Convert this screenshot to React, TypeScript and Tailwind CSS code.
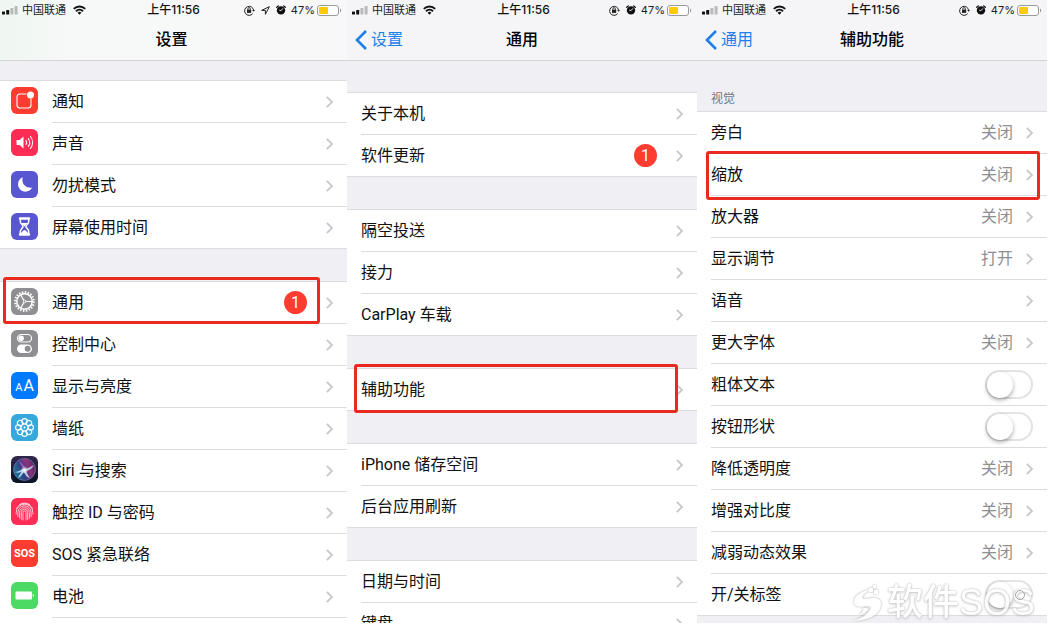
import type { ReactNode } from "react";

type RowProps = {
  label: string;
  icon?: ReactNode;
  iconBg?: string;
  value?: string;
  badge?: number;
  toggle?: boolean;
  last?: boolean;
  mark?: string;
};

function Chevron() {
  return (
    <svg width="7" height="12" viewBox="0 0 7 12" fill="none" stroke="#c7c7cc" strokeWidth="1.8" className="shrink-0">
      <path d="M.8.8 6 6 .8 11.2" />
    </svg>
  );
}

function Row({ label, icon, iconBg, value, badge, toggle, last, mark }: RowProps) {
  const body = (
    <>
      {icon && (
        <span className={`mr-3.5 mb-[3px] ml-[11px] flex size-[27px] shrink-0 items-center justify-center overflow-hidden rounded-md ${iconBg ?? ""}`}>
          {icon}
        </span>
      )}
      <span
        className={`flex h-full min-w-0 flex-1 items-center border-[#dcdce0] pr-3.5 ${
          !icon && last ? "pl-3.5" : ""
        } ${last && icon ? "" : "border-b"}`}
      >
        <span className="flex-1 truncate">{label}</span>
        {value && <span className="mr-[13px] text-[#8e8e93]">{value}</span>}
        {badge && (
          <span className="mr-[19px] flex size-[23px] items-center justify-center rounded-full bg-[#fe3c30] text-white">
            {badge}
          </span>
        )}
        {toggle ? (
          <input
            type="checkbox"
            role="switch"
            className="h-[29px] w-12 appearance-none rounded-full border-2 border-[#e3e3e3] bg-white before:block before:size-[26px] before:rounded-full before:bg-white before:shadow-[0_2px_4px_rgba(0,0,0,0.35)] checked:bg-[#4cd964] checked:before:translate-x-[18px]"
          />
        ) : (
          <Chevron />
        )}
      </span>
      {mark && <span className={`pointer-events-none absolute z-10 rounded-[3px] border-3 border-[#ea291f] ${mark}`} />}
    </>
  );

  const cls = `relative flex h-[42px] items-center bg-white text-base text-[#111] ${
    !icon && !last ? "pl-3.5" : ""
  } ${icon && last ? "border-b border-[#dcdce0]" : ""}`;

  return toggle ? <label className={cls}>{body}</label> : <a href="#" className={cls}>{body}</a>;
}

function Group({ children }: { children: ReactNode }) {
  return <div className="border-t border-[#dcdce0] bg-white">{children}</div>;
}

function StatusBar({ location }: { location?: boolean }) {
  return (
    <div className="grid h-5 grid-cols-[1fr_auto_1fr] items-center font-['Inter','Noto_Sans_CJK_SC',sans-serif] text-[11px] leading-4 text-[#222]">
      <div className={`flex items-center ${location ? "pl-0.5" : "pl-[5px]"}`}>
        <svg width="16" height="9" viewBox="0 0 16 9" fill="#111">
          <rect x="0" y="5.5" width="3" height="3" rx=".6" />
          <rect x="4.2" y="4" width="3" height="4.5" rx=".6" />
          <rect x="8.4" y="2" width="3" height="6.5" rx=".6" fill="#b9babd" />
          <rect x="12.6" y="0" width="3" height="8.5" rx=".6" fill="#b9babd" />
        </svg>
        <span className="ml-1">中国联通</span>
        <svg width="13" height="10" viewBox="0 0 13 10" fill="none" stroke="#111" strokeWidth="1.9" className="ml-[7px]">
          <path d="M.8 3.8a8.1 8.1 0 0 1 11.4 0" />
          <path d="M3 6.2a5 5 0 0 1 7 0" />
          <path d="m4.6 7.8 1.9 2 1.9-2a2.7 2.7 0 0 0-3.8 0Z" fill="#111" stroke="none" />
        </svg>
      </div>
      <span className={`text-xs font-medium text-[#111] ${location ? "" : "pl-[3px]"}`}>上午11:56</span>
      <div className="flex items-center justify-end pr-[5px]">
        <svg width="11" height="11" viewBox="0 0 11 11" fill="none" stroke="#222">
          <path d="M8.7 8.6A4.5 4.5 0 1 1 9.6 5.3" />
          <path d="m8.2 5 1.5 1.8L11 5Z" fill="#222" stroke="none" />
          <rect x="3" y="4.7" width="4.200" height="3.200" fill="#222" stroke="none" />
          <path d="M3.900 5V3.800a1.200 1.200 0 0 1 2.400 0V5" strokeWidth=".9" />
        </svg>
        {location && (
          <svg width="9" height="9" viewBox="0 0 9 9" fill="none" stroke="#222" strokeLinejoin="round" className="ml-1.5">
            <path d="M8.4.6.7 4.4h3.7v3.9Z" />
          </svg>
        )}
        <svg width="10" height="10" viewBox="0 0 10 10" className="ml-1.5">
          <circle cx="5" cy="5.4" r="4.2" fill="#111" />
          <path d="M.7 2.3 2.3.9M9.3 2.3 7.7.9" stroke="#111" strokeWidth="1.3" strokeLinecap="round" />
          <path d="M6.9 3.4 4.9 5.7l-1.6-.6" stroke="#fff" strokeWidth=".9" fill="none" />
        </svg>
        <span className="ml-[5px]">47%</span>
        <svg width="25" height="11" viewBox="0 0 25 11" className="ml-0.5">
          <rect x=".5" y=".5" width="21" height="10" rx="2.5" fill="#fff" stroke="#9b9b9f" />
          <rect x="2" y="2" width="9" height="7" rx="1" fill="#fdca0a" />
          <path d="M23 3.5c1.6.5 1.6 3.5 0 4Z" fill="#9b9b9f" />
        </svg>
      </div>
    </div>
  );
}

function Header({ title, back }: { title: string; back?: string }) {
  return (
    <header
      className={`h-[61px] shrink-0 border-b border-[#d3d3d8] ${
        back ? "bg-[#f5f5f7]" : "bg-linear-to-r from-[#eff7f1] via-[#f7f8f8] via-20% to-[#f8f8f9]"
      }`}
    >
      <StatusBar location={!back} />
      <div className={`grid h-10 grid-cols-[1fr_auto_1fr] items-center ${back ? "" : "pr-1"}`}>
        <div className="pl-2">
          {back && (
            <a href="#" className="flex items-center gap-1 text-base text-[#1a82ee]">
              <svg width="12" height="20" viewBox="0 0 12 20" fill="none" stroke="#1a7fe6" strokeWidth="2.6">
                <path d="M11 1 2 10l9 9" />
              </svg>
              {back}
            </a>
          )}
        </div>
        <h1 className="text-base font-medium text-black">{title}</h1>
      </div>
    </header>
  );
}

const glyph = { width: 27, height: 27, viewBox: "0 0 27 27", fill: "none", stroke: "#fff" };

const BellIcon = () => (
  <svg {...glyph}>
    <path d="M15.5 7H9a3 3 0 0 0-3 3v8a3 3 0 0 0 3 3h8a3 3 0 0 0 3-3v-6.500" strokeWidth="1.1" />
    <circle cx="19.500" cy="8" r="3.500" fill="#fff" stroke="none" />
  </svg>
);

const SoundIcon = () => (
  <svg {...glyph} strokeLinecap="round">
    <path d="M5.500 11h3l4-3.500v12l-4-3.500h-3Z" fill="#fff" stroke="none" />
    <path d="M15 11.500a4 4 0 0 1 0 4M17.300 9.500a7 7 0 0 1 0 8M19.500 7.500a10 10 0 0 1 0 12" strokeWidth="1.1" />
  </svg>
);

const MoonIcon = () => (
  <svg {...glyph}>
    <path d="M11.800 6.200A8 8 0 0 0 21.200 16.600 7.500 7.500 0 1 1 11.800 6.200Z" fill="#fff" stroke="none" />
  </svg>
);

const HourglassIcon = () => (
  <svg {...glyph} strokeWidth="1.5">
    <path d="M9 5.500h9M9 21.500h9" strokeWidth="2.4" strokeLinecap="round" />
    <path d="M9.300 6v2.500c0 2.500 2.700 3.300 2.700 5s-2.700 2.500-2.700 5V21h8.400v-2.500c0-2.500-2.700-3.300-2.700-5s2.700-2.500 2.700-5V6" />
    <path d="M10.500 10h6l-3 3.500ZM10 21c0-2 1.500-3 3.500-4 2 1 3.500 2 3.500 4Z" fill="#fff" stroke="none" />
  </svg>
);

const GearIcon = () => (
  <svg {...glyph}>
    <circle cx="13.500" cy="13.500" r="9.300" strokeWidth="2.2" strokeDasharray="1.46 1.46" />
    <circle cx="13.500" cy="13.500" r="7.700" strokeWidth="1.5" />
    <circle cx="13.500" cy="13.500" r="1.300" strokeWidth="1" />
    <path d="M15 13.500h6M12.700 12.200 9.800 7M12.700 14.800 9.800 20" strokeWidth="1.2" />
  </svg>
);

const ControlIcon = () => (
  <svg {...glyph}>
    <rect x="6.500" y="4.500" width="14" height="7.500" rx="3.750" strokeWidth="1.2" />
    <circle cx="10.200" cy="8.250" r="2.700" fill="#fff" stroke="none" />
    <rect x="6" y="14.500" width="15" height="8.500" rx="4.250" fill="#fff" stroke="none" />
    <circle cx="16.700" cy="18.750" r="3" fill="#8e8e93" stroke="none" />
  </svg>
);

const TextSizeIcon = () => (
  <span className="flex items-baseline gap-px leading-none text-white">
    <span className="text-[11px]">A</span>
    <span className="text-base leading-none">A</span>
  </span>
);

const petals = [0, 45, 90, 135, 180, 225, 270, 315];

const FlowerIcon = () => (
  <svg {...glyph} strokeWidth="1.1">
    {petals.map((deg) => (
      <circle key={deg} cx="13.500" cy="7.300" r="2.700" transform={`rotate(${deg} 13.500 13.500)`} />
    ))}
    <circle cx="13.500" cy="13.500" r="3.500" strokeWidth=".8" />
    <circle cx="13.500" cy="13.500" r="1" fill="#fff" stroke="none" />
  </svg>
);

const SiriIcon = () => (
  <svg width="27" height="27" viewBox="0 0 27 27">
    <defs>
      <linearGradient id="siriBg" x2="0" y2="1">
        <stop stopColor="#33264d" />
        <stop offset="1" stopColor="#0b1424" />
      </linearGradient>
      <linearGradient id="siriOrb" x1="0" y1=".7" x2="1" y2=".3">
        <stop stopColor="#16a3bd" />
        <stop offset=".4" stopColor="#3a4a9c" />
        <stop offset=".7" stopColor="#b2398f" />
        <stop offset="1" stopColor="#5b2a66" />
      </linearGradient>
      <radialGradient id="siriCore">
        <stop stopColor="#fff" />
        <stop offset="1" stopColor="#fff" stopOpacity="0" />
      </radialGradient>
    </defs>
    <rect width="27" height="27" fill="url(#siriBg)" />
    <circle cx="13.500" cy="13.500" r="11" fill="url(#siriOrb)" fillOpacity=".75" stroke="#7c86b5" strokeWidth=".6" />
    <path d="M4 16c4 0 6-3 9-3 4 0 6-2 10-4-2 4-5 5-8 6 1 2 2 4 4 7-4-1-5-4-6-6-2 2-3 5-6 6 1-3 3-5 3-6-2 1-4 1-6 0Z" fill="#c4f0ff" fillOpacity=".8" />
    <path d="M13 13C11 10 9 8 8 5c3 2 5 5 6 7Z" fill="#d56ac8" fillOpacity=".7" />
    <circle cx="13.500" cy="14" r="4" fill="url(#siriCore)" />
  </svg>
);

const TouchIcon = () => (
  <svg {...glyph} stroke="#ffd5dc" strokeWidth=".9" strokeLinecap="round">
    <path d="M8.500 6.500a9.500 9.500 0 0 1 10.200.1M5.500 10.500a9 9 0 0 1 16 0M5.200 16v-1.500a8.300 8.300 0 0 1 16.600 0V16" />
    <path d="M6.900 18.500v-4a6.600 6.600 0 0 1 13.200 0v4.200M8.600 20v-5.500a4.900 4.900 0 0 1 9.800 0v5.800M10.300 21.300v-6.800a3.200 3.200 0 0 1 6.400 0v7M12 22v-7.500a1.500 1.500 0 0 1 3 0V22" />
  </svg>
);

const SosIcon = () => <span className="text-[11px] leading-none font-bold text-white">SOS</span>;

const BatteryIcon = () => (
  <svg {...glyph} fill="#fff" stroke="none">
    <rect x="4.500" y="9.500" width="16.500" height="8" rx="1" />
    <path d="M21.800 12c1.500.3 1.500 2.700 0 3Z" />
  </svg>
);

const accessibility: RowProps[] = [
  { label: "旁白", value: "关闭" },
  { label: "缩放", value: "关闭", mark: "-top-[3px] -bottom-1 left-[9px] right-[7px]" },
  { label: "放大器", value: "关闭" },
  { label: "显示调节", value: "打开" },
  { label: "语音" },
  { label: "更大字体", value: "关闭" },
  { label: "粗体文本", toggle: true },
  { label: "按钮形状", toggle: true },
  { label: "降低透明度", value: "关闭" },
  { label: "增强对比度", value: "关闭" },
  { label: "减弱动态效果", value: "关闭" },
  { label: "开/关标签", toggle: true, last: true },
];

function Watermark() {
  return (
    <div className="pointer-events-none absolute right-3 -bottom-0.5 z-20 flex items-center gap-1 opacity-85">
      <svg width="32" height="40" viewBox="0 0 32 40" fill="#fff" className="drop-shadow-[0_0_1px_#9c9ca0]">
        <path d="M20 6C11 8 3 12 3 19c0 5 6 5 11 4.500 4-.5 7 0 5 3.500-3 5-10 9-18 11C14 38 30 33 30 21c0-6-6-6.500-12-5.500-5 .8-8 .5-6-3C13.500 10 17 8 20 6Z" />
        <path d="M12 25c5-1 6 1 4 3s-6 4-9 5c3-3 6-6 5-8Z" />
        <path d="M18 5h4v4h-4ZM23 7h4v4h-4ZM22 2h3v3h-3Z" />
      </svg>
      <span className="font-['Liberation_Sans','Noto_Sans_CJK_SC',sans-serif] text-4xl leading-[44px] font-medium text-white [text-shadow:0_0_2px_#a8a8ac,0_1px_3px_#c4c4c8]">
        软件SOS
      </span>
    </div>
  );
}

export default function App() {
  return (
    <div className="h-screen overflow-hidden bg-white pr-0.5 pb-2 font-['Roboto','Noto_Sans_CJK_SC',sans-serif]">
      <main className="grid h-full grid-cols-[347fr_350fr_350fr] overflow-hidden">
        <section className="min-w-0 overflow-hidden bg-[#efeff4]">
          <Header title="设置" />
          <div className="flex flex-col gap-8 pt-[19px]">
            <Group>
              <Row label="通知" icon={<BellIcon />} iconBg="bg-[#fe3c30]" />
              <Row label="声音" icon={<SoundIcon />} iconBg="bg-[#fd2d55]" />
              <Row label="勿扰模式" icon={<MoonIcon />} iconBg="bg-[#5856d0]" />
              <Row label="屏幕使用时间" icon={<HourglassIcon />} iconBg="bg-[#5856d0]" last />
            </Group>
            <Group>
              <Row label="通用" icon={<GearIcon />} iconBg="bg-[#8e8e93]" badge={1} mark="-top-[5px] bottom-0 left-[3px] right-[27px]" />
              <Row label="控制中心" icon={<ControlIcon />} iconBg="bg-[#8e8e93]" />
              <Row label="显示与亮度" icon={<TextSizeIcon />} iconBg="bg-[#007aff]" />
              <Row label="墙纸" icon={<FlowerIcon />} iconBg="bg-[#36a8dc]" />
              <Row label="Siri 与搜索" icon={<SiriIcon />} />
              <Row label="触控 ID 与密码" icon={<TouchIcon />} iconBg="bg-[#fd2d55]" />
              <Row label="SOS 紧急联络" icon={<SosIcon />} iconBg="bg-[#fe3c30]" />
              <Row label="电池" icon={<BatteryIcon />} iconBg="bg-[#4cd964]" />
              <div className="h-[42px]" />
            </Group>
          </div>
        </section>

        <section className="min-w-0 overflow-hidden bg-[#efeff4]">
          <Header title="通用" back="设置" />
          <div className="flex flex-col gap-8 pt-[31px]">
            <Group>
              <Row label="关于本机" />
              <Row label="软件更新" badge={1} last />
            </Group>
            <Group>
              <Row label="隔空投送" />
              <Row label="接力" />
              <Row label="CarPlay 车载" last />
            </Group>
            <Group>
              <Row label="辅助功能" last mark="-top-[5px] -bottom-0.5 left-[7px] right-[19px]" />
            </Group>
            <Group>
              <Row label="iPhone 储存空间" />
              <Row label="后台应用刷新" last />
            </Group>
            <Group>
              <Row label="日期与时间" />
              <Row label="键盘" />
            </Group>
          </div>
        </section>

        <section className="relative min-w-0 overflow-hidden bg-[#efeff4]">
          <Header title="辅助功能" back="通用" />
          <h2 className="flex h-[50px] items-end px-3.5 pb-1 text-xs leading-4 text-[#77777c]">视觉</h2>
          <Group>
            {accessibility.map((row) => (
              <Row key={row.label} {...row} />
            ))}
          </Group>
          {/* off-label ring of the last switch */}
          <span className="pointer-events-none absolute right-[22px] bottom-[23px] z-30 size-[10px] rounded-full border border-[#a5a5a8]" />
          <Watermark />
        </section>
      </main>
    </div>
  );
}
